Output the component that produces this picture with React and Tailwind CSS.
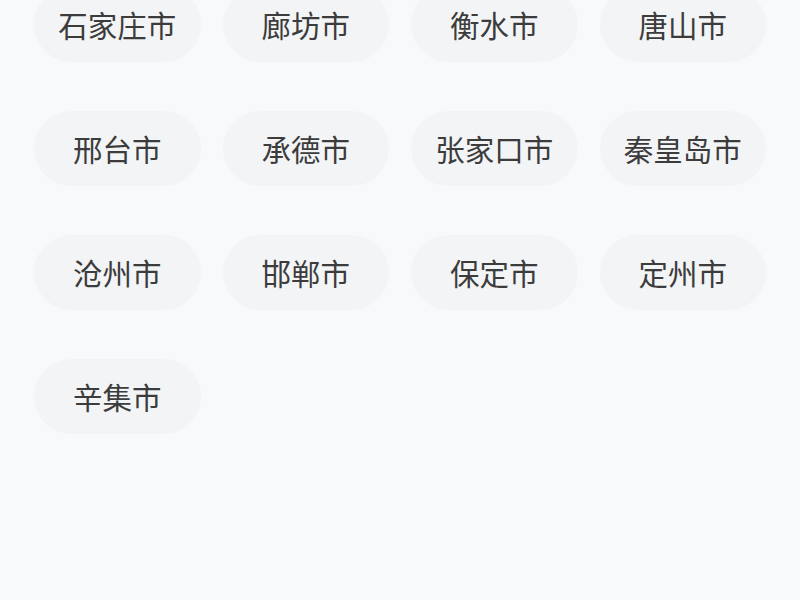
const cities = [
  "石家庄市", "廊坊市", "衡水市", "唐山市",
  "邢台市", "承德市", "张家口市", "秦皇岛市",
  "沧州市", "邯郸市", "保定市", "定州市",
  "辛集市",
];

export default function App() {
  return (
    <div
      className="w-[800px] h-[600px] overflow-hidden bg-[#f8f9fb]"
      style={{ fontFamily: '"Noto Sans CJK SC", "Noto Sans", sans-serif' }}
    >
      <div className="-mt-[13px] px-[34px] grid grid-cols-4 gap-x-[22px] gap-y-[49px]">
        {cities.map((c) => (
          <div
            key={c}
            className="h-[75px] rounded-full bg-[#f3f4f6] flex items-center justify-center text-[29.5px] text-[#3c3c3c]"
          >
            {c}
          </div>
        ))}
      </div>
    </div>
  );
}
